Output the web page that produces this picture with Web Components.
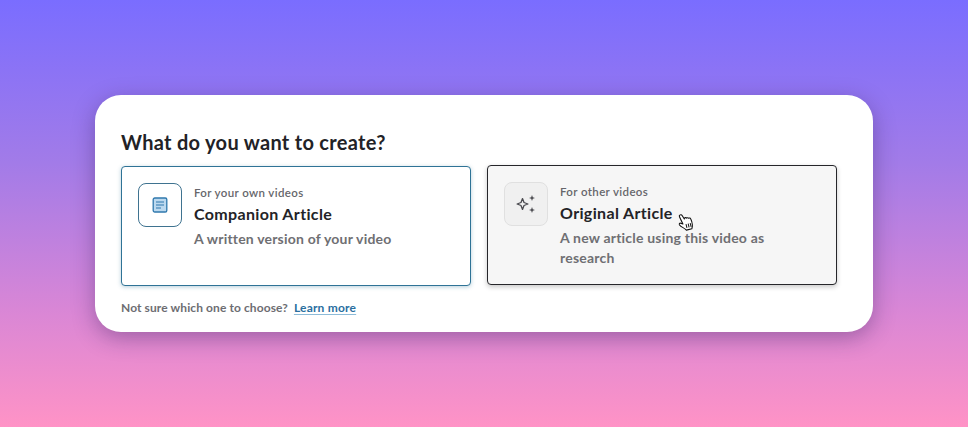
<!DOCTYPE html>
<html>
<head>
<meta charset="utf-8">
<style>
  html, body { margin: 0; height: 100%; }
  body {
    height: 427px;
    overflow: hidden;
    background: linear-gradient(180deg, #7a6dff 0%, #a27be8 38%, #d886d6 72%, #ff93c6 100%);
    font-family: Lato, "Liberation Sans", sans-serif;
  }
</style>
</head>
<body>
<create-dialog>
  <span slot="title">What do you want to create?</span>
  <choice-card selected>
    <doc-icon slot="icon"></doc-icon>
    <span slot="eyebrow">For your own videos</span>
    <span slot="name">Companion Article</span>
    A written version of your video
  </choice-card>
  <choice-card hovered>
    <sparkle-icon slot="icon"></sparkle-icon>
    <span slot="eyebrow">For other videos</span>
    <span slot="name">Original Article</span>
    <hand-cursor slot="overlay"></hand-cursor>
    A new article using this video as research
  </choice-card>
  <span slot="foot">Not sure which one to choose?</span>
  <a slot="link" href="#">Learn more</a>
</create-dialog>

<script>
// small helper, every element here is just a template + shadow root
const define = (tag, html) => {
  const temp = document.createElement("template");
  temp.innerHTML = html;
  customElements.define(tag, class extends HTMLElement {
    constructor() {
      super();
      this.attachShadow({ mode: "open" }).appendChild(temp.content.cloneNode(true));
    }
  });
};

define("create-dialog", `
<style>
  :host {
    display: block;
    box-sizing: border-box;
    margin: 95px 95px 0;
    height: 237px;
    padding: 34px 36px 0 26px;
    background: #fff;
    border-radius: 26px;
    box-shadow: 0 6px 22px rgba(50, 30, 90, .38);
    color: #1f1f22;
  }
  h1 { margin: 0 0 11px; font-size: 20px; line-height: 26px; font-weight: 700; color: #222226; letter-spacing: .3px; }
  .choices { display: grid; grid-template-columns: 350px 350px; gap: 16px; }
  .foot { display: flex; gap: 6px; margin-top: 14px; font-size: 12px; line-height: 16px; font-weight: 700; color: #6d6d72; letter-spacing: .1px; }
  ::slotted(a) { color: #2a6f9f; letter-spacing: .2px; text-decoration: underline; text-decoration-color: #8dbbd8; text-underline-offset: 2px; }
</style>
<h1><slot name="title"></slot></h1>
<div class="choices"><slot></slot></div>
<div class="foot"><slot name="foot"></slot><slot name="link"></slot></div>
`);

define("choice-card", `
<style>
  :host {
    position: relative;
    display: flex;
    gap: 12px;
    box-sizing: border-box;
    height: 120px;
    padding: 16px;
    background: #fff;
    border: 1px solid #2f7396;
    border-radius: 4px;
    box-shadow: 0 1px 4px rgba(47, 115, 150, .35);
    font-size: 14px;
    line-height: 20px;
    font-weight: 700;
    color: #6f6f73;
    letter-spacing: .2px;
  }
  :host([hovered]) {
    top: -1px;
    background: #f6f6f6;
    border-color: #26262a;
    box-shadow: 0 2px 5px rgba(0, 0, 0, .22);
  }
  .box {
    flex: none;
    display: flex;
    align-items: center;
    justify-content: center;
    box-sizing: border-box;
    width: 44px;
    height: 44px;
    background: #fff;
    border: 1px solid #3f7390;
    border-radius: 8px;
  }
  :host([hovered]) .box { background: #f0f0f0; border-color: #e0e0e0; }
  .eyebrow { padding-top: 2px; font-size: 11.5px; line-height: 16px; font-weight: 600; color: #66666b; letter-spacing: .37px; }
  .name { margin: 2px 0 3.5px; font-size: 16px; line-height: 22px; color: #232327; letter-spacing: .35px; }
  .text { display: block; flex: 1; max-width: 250px; }
</style>
<div class="box"><slot name="icon"></slot></div>
<div class="text">
  <div class="eyebrow"><slot name="eyebrow"></slot></div>
  <div class="name"><slot name="name"></slot></div>
  <slot></slot>
</div>
<slot name="overlay"></slot>
`);

define("doc-icon", `
<style>:host { display: block; width: 16px; height: 16px; } svg { display: block; }</style>
<svg width="16" height="16" viewBox="0 0 16 16" fill="none">
  <rect x="1.2" y="1" width="13.6" height="14" rx="1.6" fill="#bcd9ef" stroke="#2f78ad" stroke-width="1.3"/>
  <path d="M4 5h8M4 8h8M4 11h5" stroke="#2f78ad" stroke-width="1.2"/>
</svg>
`);

define("sparkle-icon", `
<style>:host { display: block; width: 20px; height: 20px; } svg { display: block; }</style>
<svg width="20" height="20" viewBox="0 0 20 20" fill="none" stroke="#4a4a4f" stroke-width="1.3" stroke-linejoin="round">
  <path d="M6.500 4.600 8 8.500l3.900 1.500L8 11.500 6.500 15.400 5 11.500 1.100 10 5 8.500Z"/>
  <path d="M16 1l.8 2.200L19 4l-2.200.8L16 7l-.8-2.200L13 4l2.200-.8Z" fill="#4a4a4f" stroke="none"/>
  <path d="M16 13l.8 2.200L19 16l-2.200.8L16 19l-.8-2.200L13 16l2.200-.8Z" fill="#4a4a4f" stroke="none"/>
</svg>
`);

define("hand-cursor", `
<style>
  :host { position: absolute; left: 190px; top: 46px; width: 16px; height: 20px; transform: rotate(-14deg); }
  svg { display: block; }
</style>
<svg width="16" height="20" viewBox="0 0 16 20">
  <path d="M3.600 1.800c.9-.5 1.900 0 2.200.9l1.300 4 .3-.9c.8-.5 1.700-.2 2 .6.700-.5 1.700-.2 2 .6.800-.3 1.700.1 1.900 1 .5 2 .5 4.300.2 6.200-.2 1.500-.9 2.800-1.500 3.800H6.400c-.7-1.300-1.800-2.500-3-3.600C2.400 13.500 1.200 12 .9 11c-.2-.9.700-1.600 1.600-1.100l2 1.300L3 3.500c-.2-.7 0-1.400.6-1.700Z" fill="#fff" stroke="#111" stroke-width="1.100" stroke-linejoin="round"/>
  <path d="M7.500 12v4M9.700 12v4M11.800 12v4" stroke="#111" stroke-width="1"/>
</svg>
`);
</script>
</body>
</html>
